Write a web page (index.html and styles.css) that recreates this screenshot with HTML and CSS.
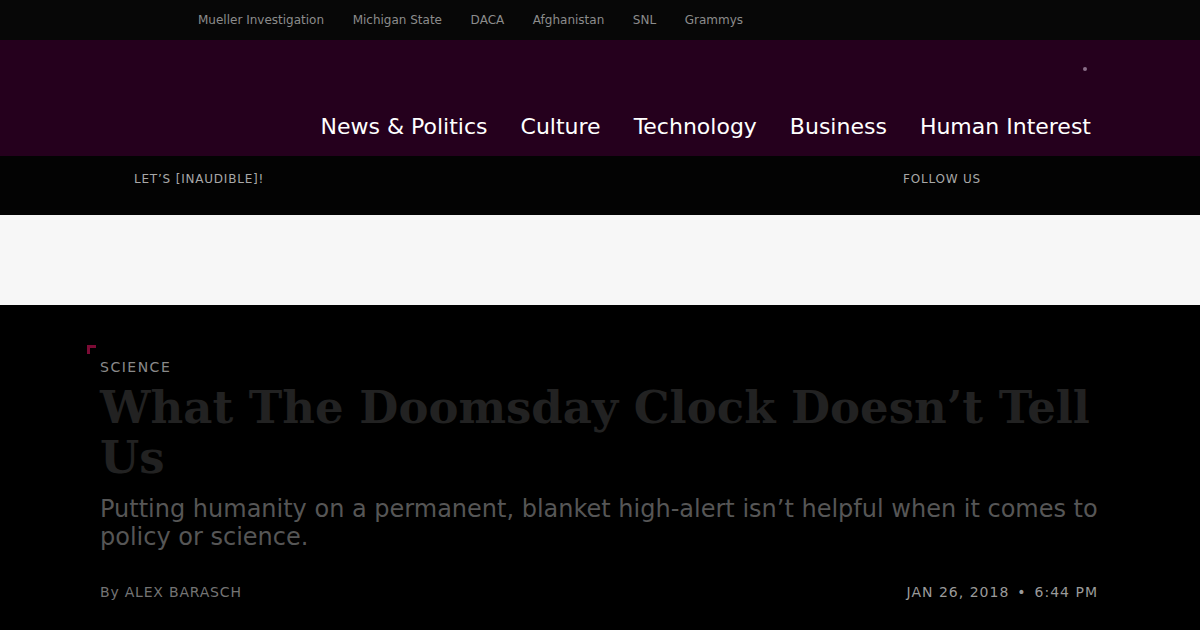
FILE: index.html
```html
<!DOCTYPE html>
<html lang="en">
<head>
<meta charset="UTF-8">
<meta name="viewport" content="width=device-width, initial-scale=1.0">
<title>What The Doomsday Clock Doesn't Tell Us</title>
<link rel="stylesheet" href="styles.css">
</head>
<body>

<!-- trending topics -->
<div class="trending">
  <a href="#">Mueller Investigation</a>
  <a href="#">Michigan State</a>
  <a href="#">DACA</a>
  <a href="#">Afghanistan</a>
  <a href="#">SNL</a>
  <a href="#">Grammys</a>
</div>

<!-- main header -->
<header class="masthead">
  <div class="masthead-top">
    <span class="dot"></span>
  </div>
  <nav class="main-nav">
    <a href="#">News &amp; Politics</a>
    <a href="#">Culture</a>
    <a href="#">Technology</a>
    <a href="#">Business</a>
    <a href="#">Human Interest</a>
  </nav>
</header>

<div class="subbar">
  <span>LET’S [INAUDIBLE]!</span>
  <span>FOLLOW US</span>
</div>

<!-- ad slot -->
<div class="ad-band"></div>

<!-- article header -->
<article class="article">
  <div class="article-head">
    <span class="corner"></span>
    <div class="section">SCIENCE</div>
    <h1 class="title">What The Doomsday Clock Doesn’t Tell Us</h1>
    <p class="dek">Putting humanity on a permanent, blanket high-alert isn’t helpful when it comes to policy or science.</p>
    <div class="meta">
      <span class="byline">By ALEX BARASCH</span>
      <span class="date">JAN 26, 2018<span class="sep">•</span>6:44 PM</span>
    </div>
  </div>
</article>

</body>
</html>
```

FILE: styles.css
```css
/* base */
body {
  margin: 0;
  background-color: #000;
  font-family: "DejaVu Sans", sans-serif;
}

a {
  text-decoration: none;
}

/* trending bar */
.trending {
  height: 40px;
  background-color: #070707;
  display: flex;
  align-items: center;
  gap: 28.6px;
  padding-left: 198px;
}

.trending a {
  color: #8c8c8c;
  font-size: 12px;
}

/* masthead */
.masthead {
  height: 116px;
  background-color: #25001d;
  display: flex;
  flex-direction: column;
}

.masthead-top {
  height: 56px;
  display: flex;
  justify-content: flex-end;
  align-items: center;
  padding-right: 113px;
}

.dot {
  width: 4px;
  height: 4px;
  margin-top: 2px;
  border-radius: 50%;
  background-color: #8a6e88;
}

.main-nav {
  display: flex;
  justify-content: flex-end;
  gap: 33px;
  margin-top: 16px;
  padding-right: 109px;
}

.main-nav a {
  color: #fff;
  font-size: 22px;
  line-height: 30px;
}

/* sub bar */
.subbar {
  height: 59px;
  background-color: #030303;
  display: flex;
  justify-content: space-between;
  padding: 16px 219px 0 134px;
  box-sizing: border-box;
  color: #a8a8a8;
  font-size: 12px;
  letter-spacing: 0.8px;
}

.ad-band {
  height: 90px;
  background-color: #f7f7f7;
}

/* article header */
.article {
  background-color: #000;
  height: 325px;
}

.article-head {
  position: relative;
  width: 1000px;
  margin: 0 auto;
  padding-top: 52px;
}

.corner {
  position: absolute;
  left: -13px;
  top: 40px;
  width: 6px;
  height: 6px;
  border-top: 3px solid #7c0b35;
  border-left: 3px solid #7c0b35;
}

.section {
  color: #8a8a8a;
  font-size: 14px;
  line-height: 20px;
  letter-spacing: 1.5px;
}

.title {
  margin: 6px 0 0;
  font-family: "DejaVu Serif", serif;
  font-weight: bold;
  font-size: 45px;
  line-height: 50px;
  color: #222;
}

.dek {
  margin: 12px 0 0;
  font-size: 24px;
  line-height: 28px;
  color: #565656;
}

.meta {
  display: flex;
  justify-content: space-between;
  margin-top: 33px;
  padding-right: 2px;
  font-size: 14px;
  letter-spacing: 1px;
}

.byline {
  color: #747474;
  letter-spacing: 0.8px;
}

.date {
  color: #9a9a9a;
}

.sep {
  margin: 0 8px;
}
```
